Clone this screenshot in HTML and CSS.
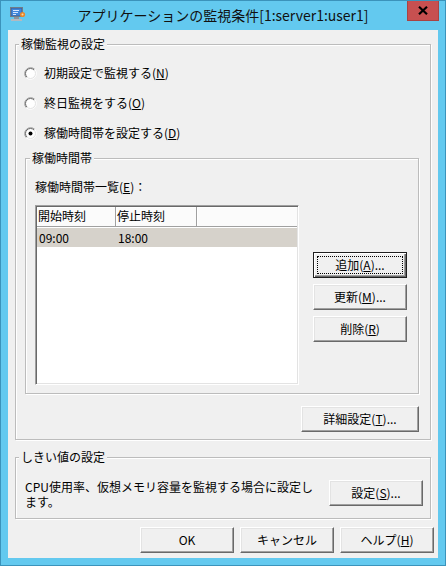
FILE: index.html
```html
<!DOCTYPE html>
<html lang="ja">
<head>
<meta charset="utf-8">
<title>アプリケーションの監視条件</title>
<link rel="stylesheet" href="styles.css">
</head>
<body>
<div class="window">
  <div class="titlebar">
    <div class="tb-left">
      <svg class="app-icon" width="17" height="16" viewBox="0 0 17 16">
        <rect x="1.5" y="1.5" width="12" height="9" fill="#3a5f9a" stroke="#707c88"/>
        <rect x="2.5" y="2.5" width="10" height="7" fill="#3f86da"/>
        <path d="M4 4.5h6M4 6.5h5M4 8.5h3" stroke="#d4e6ff"/>
        <rect x="5" y="11" width="5" height="2" fill="#8c939b"/>
        <rect x="2" y="13" width="11" height="2" fill="#b3b9c0"/>
        <circle cx="13.5" cy="8.5" r="2.6" fill="#e8872a"/>
        <circle cx="13.5" cy="8.5" r="1" fill="#ffd9a0"/>
      </svg>
    </div>
    <div class="title">アプリケーションの監視条件[1:server1:user1]</div>
    <div class="tb-right">
      <div class="close">
        <svg width="10" height="9" viewBox="0 0 10 9"><path d="M1 0.8L9 8.2M9 0.8L1 8.2" stroke="#000" stroke-width="2.2"/></svg>
      </div>
    </div>
  </div>
  <div class="client">
    <fieldset class="group g-monitor">
      <legend>稼働監視の設定</legend>
      <div class="radios">
        <label class="radio"><svg class="radio-box" width="13" height="13" viewBox="0 0 13 13"><circle cx="6.5" cy="6.5" r="5.5" fill="#fff"/><path d="M2.26 10.74A6 6 0 0 1 10.74 2.26" stroke="#a0a0a0" fill="none"/><path d="M10.74 2.26A6 6 0 0 1 2.26 10.74" stroke="#fff" fill="none"/><path d="M2.96 10.04A5 5 0 0 1 10.04 2.96" stroke="#696969" fill="none"/><path d="M10.04 2.96A5 5 0 0 1 2.96 10.04" stroke="#e3e3e3" fill="none"/></svg><span>初期設定で監視する(<u>N</u>)</span></label>
        <label class="radio"><svg class="radio-box" width="13" height="13" viewBox="0 0 13 13"><circle cx="6.5" cy="6.5" r="5.5" fill="#fff"/><path d="M2.26 10.74A6 6 0 0 1 10.74 2.26" stroke="#a0a0a0" fill="none"/><path d="M10.74 2.26A6 6 0 0 1 2.26 10.74" stroke="#fff" fill="none"/><path d="M2.96 10.04A5 5 0 0 1 10.04 2.96" stroke="#696969" fill="none"/><path d="M10.04 2.96A5 5 0 0 1 2.96 10.04" stroke="#e3e3e3" fill="none"/></svg><span>終日監視をする(<u>O</u>)</span></label>
        <label class="radio"><svg class="radio-box" width="13" height="13" viewBox="0 0 13 13"><circle cx="6.5" cy="6.5" r="5.5" fill="#fff"/><path d="M2.26 10.74A6 6 0 0 1 10.74 2.26" stroke="#a0a0a0" fill="none"/><path d="M10.74 2.26A6 6 0 0 1 2.26 10.74" stroke="#fff" fill="none"/><path d="M2.96 10.04A5 5 0 0 1 10.04 2.96" stroke="#696969" fill="none"/><path d="M10.04 2.96A5 5 0 0 1 2.96 10.04" stroke="#e3e3e3" fill="none"/><circle cx="6.5" cy="6.5" r="2" fill="#000"/></svg><span>稼働時間帯を設定する(<u>D</u>)</span></label>
      </div>
      <fieldset class="group g-hours">
        <legend>稼働時間帯</legend>
        <div class="hours-body">
          <div class="list-col">
            <div class="list-label">稼働時間帯一覧(<u>E</u>)：</div>
            <div class="listview">
              <div class="lv-header">
                <div class="lv-h c1">開始時刻</div>
                <div class="lv-h c2">停止時刻</div>
                <div class="lv-h c3"></div>
              </div>
              <div class="lv-row selected">
                <div class="lv-cell c1">09:00</div>
                <div class="lv-cell c2">18:00</div>
              </div>
            </div>
          </div>
          <div class="btn-col">
            <button class="btn default">追加(<u>A</u>)...</button>
            <button class="btn">更新(<u>M</u>)...</button>
            <button class="btn">削除(<u>R</u>)</button>
          </div>
        </div>
      </fieldset>
      <div class="detail-row">
        <button class="btn wide">詳細設定(<u>T</u>)...</button>
      </div>
    </fieldset>
    <fieldset class="group g-threshold">
      <legend>しきい値の設定</legend>
      <div class="threshold-body">
        <p class="threshold-text">CPU使用率、仮想メモリ容量を監視する場合に設定します。</p>
        <button class="btn set-btn">設定(<u>S</u>)...</button>
      </div>
    </fieldset>
    <div class="footer">
      <button class="btn">OK</button>
      <button class="btn">キャンセル</button>
      <button class="btn">ヘルプ(<u>H</u>)</button>
    </div>
  </div>
</div>
</body>
</html>
```

FILE: styles.css
```css
* { box-sizing: border-box; }
html, body { margin: 0; padding: 0; }
body {
  width: 446px;
  height: 566px;
  font-family: "Noto Sans CJK JP", "Noto Sans", sans-serif;
  font-size: 12px;
  color: #000;
}
.window {
  width: 446px;
  height: 566px;
  background: #63c9ef;
  border: 1px solid #3b93bb;
  padding: 0 7px 7px 7px;
  display: flex;
  flex-direction: column;
}
.titlebar {
  height: 29px;
  display: grid;
  grid-template-columns: 1fr auto 1fr;
  align-items: start;
}
.tb-left { padding: 5px 0 0 1px; }
.app-icon { display: block; }
.title {
  font-size: 14px;
  line-height: 29px;
  color: #111;
  white-space: nowrap;
}
.tb-right { display: flex; justify-content: flex-end; }
.close {
  width: 32px;
  height: 20px;
  margin-right: -1px;
  background: #c75050;
  border: 1px solid #a94343;
  border-top: none;
  display: flex;
  align-items: center;
  justify-content: center;
}
.close svg { display: block; }
.client {
  flex: 1;
  background: #f0f0f0;
  display: flex;
  flex-direction: column;
}
.group {
  margin: 0;
  padding: 0;
  border: 1px solid #bcbcbc;
  box-shadow: inset 1px 1px 0 #fff, 1px 1px 0 #fff;
  min-width: 0;
}
.group > legend {
  padding: 0 2px;
  line-height: 16px;
  height: 16px;
  background: #f0f0f0;
}
.g-monitor { margin: 6px 7px 0 7px; padding-bottom: 7px; }
.g-monitor > legend { margin-left: 3px; }
.radios {
  padding: 13px 0 0 8px;
  display: flex;
  flex-direction: column;
  gap: 14px;
}
.radio {
  display: flex;
  align-items: center;
  gap: 7px;
  height: 16px;
  line-height: 16px;
}
.radio-box { display: block; flex: none; }
.g-hours { margin: 9px 11px 0 9px; }
.g-hours > legend { margin-left: 4px; }
.hours-body {
  display: flex;
  gap: 14px;
  padding: 13px 11px 8px 9px;
}
.list-label { line-height: 16px; height: 16px; }
.listview {
  margin-top: 10px;
  width: 264px;
  height: 180px;
  background: #fff;
  border: 1px solid;
  border-color: #a0a0a0 #fff #fff #a0a0a0;
  box-shadow: inset 1px 1px 0 #696969, inset -1px -1px 0 #e3e3e3;
  padding: 1px;
}
.lv-header { display: flex; height: 20px; }
.lv-h {
  height: 20px;
  line-height: 18px;
  padding-left: 1px;
  background: #fbfbfb;
  border-right: 1px solid #a0a0a0;
  border-bottom: 1px solid #a0a0a0;
  box-shadow: inset 1px 1px 0 #fff;
  white-space: nowrap;
}
.lv-h.c1 { width: 79px; }
.lv-h.c2 { width: 81px; }
.lv-h.c3 { flex: 1; border-right: none; }
.lv-row { display: flex; height: 19px; line-height: 19px; margin-top: 1px; }
.lv-row.selected { background: #d6d2cb; }
.lv-cell { padding-left: 2px; }
.lv-cell.c1 { width: 79px; }
.lv-cell.c2 { width: 81px; }
.btn-col {
  padding-top: 73px;
  display: flex;
  flex-direction: column;
  gap: 6px;
}
.btn {
  font: inherit;
  color: #000;
  width: 94px;
  height: 26px;
  padding: 0;
  background: #f0f0f0;
  border: 1px solid;
  border-color: #fff #696969 #696969 #fff;
  box-shadow: inset -1px -1px 0 #a0a0a0, inset 1px 1px 0 #e3e3e3;
  line-height: 22px;
  text-align: center;
  white-space: nowrap;
}
.btn.default {
  border-color: #1e1e1e;
  box-shadow: inset 1px 1px 0 #fff, inset -1px -1px 0 #696969, inset -2px -2px 0 #a0a0a0;
  outline: 1px dotted #000;
  outline-offset: -5px;
}
.btn.wide { width: 118px; }
.detail-row {
  display: flex;
  justify-content: flex-end;
  padding: 12px 11px 0 0;
}
.g-threshold { margin: 9px 7px 0 7px; }
.g-threshold > legend { margin-left: 3px; }
.threshold-body {
  display: flex;
  align-items: flex-start;
  padding: 14px 7px 9px 9px;
}
.threshold-text {
  margin: 0;
  width: 292px;
  line-height: 15px;
}
.set-btn { margin: 1px 0 0 auto; }
.footer {
  display: flex;
  justify-content: flex-end;
  gap: 6px;
  padding: 8px 4px 0 0;
}
```
